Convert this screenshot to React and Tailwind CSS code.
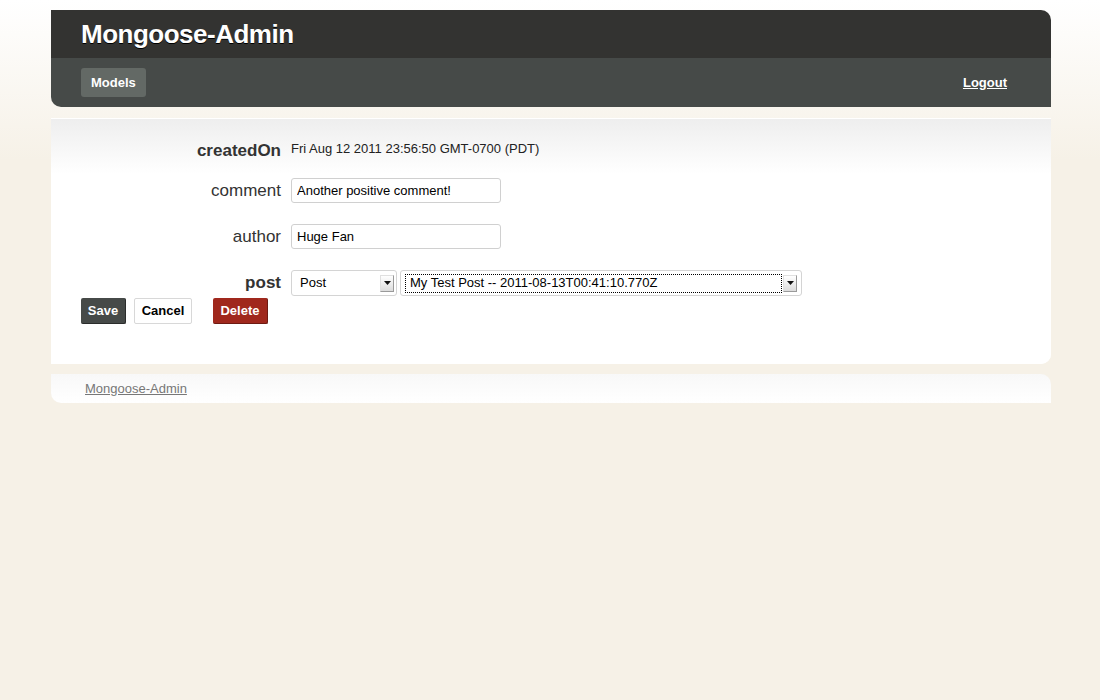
import React from 'react';

function Arrow() {
  return (
    <span className="w-[14px] h-[17px] flex items-center justify-center border border-[#9a9a9a] border-t-[#e0e0e0] border-l-[#e0e0e0] bg-[linear-gradient(to_bottom,#ffffff,#dcdcdc)]">
      <svg width="7" height="4" viewBox="0 0 7 4"><path d="M0 0h7L3.5 4z" fill="#111" /></svg>
    </span>
  );
}

function Field({ label, bold, children, className }) {
  return (
    <div className={`flex items-center ${className}`}>
      <div className={`w-[200px] text-right text-[17px] text-[#333] ${bold ? 'font-bold' : ''}`}>{label}</div>
      <div className="ml-[10px] flex items-center">{children}</div>
    </div>
  );
}

export default function App() {
  return (
    <div className="min-h-screen bg-[#f6f1e7] bg-[linear-gradient(to_bottom,#ffffff_0px,#f6f1e7_160px)] font-['Liberation_Sans',Arial,sans-serif] pt-[10px]">
      <div className="w-[1000px] ml-[51px]">
        {/* header */}
        <div className="rounded-tr-[10px] rounded-bl-[10px] overflow-hidden">
          <div className="h-[48px] bg-[#333331] px-[30px] flex items-center">
            <h1 className="text-[26px] font-bold text-white tracking-[-0.5px] [text-shadow:0_1px_0_#000]">Mongoose-Admin</h1>
          </div>
          <div className="h-[49px] bg-[#464a48] pl-[30px] pr-[44px] flex items-center justify-between">
            <span className="h-[29px] px-[10px] rounded-[3px] bg-[#636965] text-white text-[13px] font-bold flex items-center">Models</span>
            <a className="text-white text-[13px] font-bold underline">Logout</a>
          </div>
        </div>

        {/* form panel */}
        <div className="mt-[11px] h-[246px] bg-white bg-[linear-gradient(to_bottom,#eeeeee_0px,#ffffff_55px)] border-t border-white rounded-br-[10px] px-[30px] pt-[20px]">
          <Field label="createdOn" bold className="h-[24px]">
            <span className="text-[13px] text-[#222] -mt-[5px]">Fri Aug 12 2011 23:56:50 GMT-0700 (PDT)</span>
          </Field>
          <Field label="comment" className="mt-[15px] h-[25px]">
            <input readOnly defaultValue="Another positive comment!" className="w-[210px] h-[25px] border border-[#d0d0d0] rounded-[3px] px-[5px] text-[13px] text-black bg-white outline-none" />
          </Field>
          <Field label="author" className="mt-[21px] h-[25px]">
            <input readOnly defaultValue="Huge Fan" className="w-[210px] h-[25px] border border-[#d0d0d0] rounded-[3px] px-[5px] text-[13px] text-black bg-white outline-none" />
          </Field>
          <Field label="post" bold className="mt-[21px] h-[26px]">
            <div className="w-[106px] h-[26px] border border-[#d4d4d4] rounded-[3px] flex items-center justify-between pl-[8px] pr-[2px] text-[13px] text-black">
              <span>Post</span>
              <Arrow />
            </div>
            <div className="ml-[3px] w-[402px] h-[26px] border border-[#d4d4d4] rounded-[3px] flex items-center justify-between pl-[4px] pr-[4px] text-[13px] text-black">
              <span className="flex-1 h-[19px] border border-dotted border-black px-[4px] flex items-center">My Test Post -- 2011-08-13T00:41:10.770Z</span>
              <span className="ml-[1px]"><Arrow /></span>
            </div>
          </Field>
          <div className="flex mt-[2px]">
            <span className="w-[45px] h-[26px] rounded-[2px] bg-[#464a48] border-r border-b border-[#2a2c2b] text-white text-[13px] font-bold flex items-center justify-center">Save</span>
            <span className="ml-[8px] w-[58px] h-[26px] rounded-[2px] bg-white border border-[#d8d8d8] text-black text-[13px] font-bold flex items-center justify-center">Cancel</span>
            <span className="ml-[21px] w-[55px] h-[26px] rounded-[2px] bg-[#a0281d] border-r border-b border-[#6e1a12] text-white text-[13px] font-bold flex items-center justify-center">Delete</span>
          </div>
        </div>

        {/* footer */}
        <div className="mt-[10px] h-[29px] bg-white bg-[linear-gradient(to_bottom,#f8f8f8,#ffffff)] rounded-tr-[10px] rounded-bl-[10px] pl-[34px] flex items-center">
          <a className="text-[13px] text-[#777] underline">Mongoose-Admin</a>
        </div>
      </div>
    </div>
  );
}
